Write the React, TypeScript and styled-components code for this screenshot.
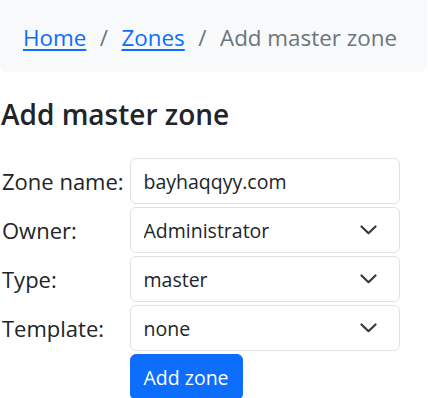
import React from "react";
import styled, { createGlobalStyle } from "styled-components";

const Global = createGlobalStyle`
  html, body { margin: 0; padding: 0; background: #fff; }
  body {
    font-family: "Open Sans", "Noto Sans", sans-serif;
    color: #212529;
    font-size: 22px;
    line-height: 1.5;
  }
  * { box-sizing: border-box; }
`;

const Page = styled.div`
  padding: 0 1px 0 1px;
`;

const Breadcrumb = styled.nav`
  background: #f8f9fa;
  border-radius: 0 0 8px 8px;
  padding: 21px 23px 17px;
  display: flex;
  align-items: center;
  margin-left: -1px;
  font-size: 22.4px;
`;

const Crumb = styled.a`
  color: #0d6efd;
  text-decoration: underline;
  text-underline-offset: 3px;
`;

const Sep = styled.span`
  color: #6c757d;
  padding: 0 13.5px;
`;

const Active = styled.span`
  color: #6c757d;
`;

const Heading = styled.h1`
  margin: 26px 0 27px;
  font-size: 28px;
  font-weight: 600;
  line-height: 1.2;
  color: #212529;
`;

const Form = styled.form`
  display: grid;
  grid-template-columns: 128.5px 270px;
  row-gap: 3px;
  align-items: center;
`;

const Label = styled.label`
  font-size: 22px;
  padding-left: 1px;
  white-space: nowrap;
`;

const controlBase = `
  width: 100%;
  height: 46px;
  font-family: "Open Sans", "Noto Sans", sans-serif;
  font-size: 19.5px;
  color: #212529;
  background: #fff;
  border: 1px solid #dee2e6;
  border-radius: 6px;
  padding: 0 13px;
  outline: none;
  margin: 0;
`;

const TextInput = styled.input`
  ${controlBase}
`;

const SelectWrap = styled.div`
  position: relative;
`;

const Select = styled.select`
  ${controlBase}
  appearance: none;
  -webkit-appearance: none;
`;

const Chevron = styled.svg`
  position: absolute;
  right: 23px;
  top: 50%;
  transform: translateY(-50%);
  pointer-events: none;
`;

const Button = styled.button`
  grid-column: 2;
  justify-self: start;
  height: 46px;
  padding: 0 13px;
  font-family: "Open Sans", "Noto Sans", sans-serif;
  font-size: 19.5px;
  color: #fff;
  background: #0d6efd;
  border: 1px solid #0d6efd;
  border-radius: 6px;
`;

const ChevronIcon = () => (
  <Chevron width="17" height="10" viewBox="0 0 17 10">
    <path d="M1.5 1.5 8.5 8.2 15.5 1.5" fill="none" stroke="#343a40" strokeWidth="2.2" strokeLinecap="round" strokeLinejoin="round" />
  </Chevron>
);

const SelectField = ({ id, value }: { id: string; value: string }) => (
  <SelectWrap>
    <Select id={id} defaultValue={value}>
      <option value={value}>{value}</option>
    </Select>
    <ChevronIcon />
  </SelectWrap>
);

export default function App() {
  return (
    <Page>
      <Global />
      <Breadcrumb>
        <Crumb href="#">Home</Crumb>
        <Sep>/</Sep>
        <Crumb href="#">Zones</Crumb>
        <Sep>/</Sep>
        <Active>Add master zone</Active>
      </Breadcrumb>
      <Heading>Add master zone</Heading>
      <Form onSubmit={(e) => e.preventDefault()}>
        <Label htmlFor="zname">Zone name:</Label>
        <TextInput id="zname" defaultValue="bayhaqqyy.com" />
        <Label htmlFor="owner">Owner:</Label>
        <SelectField id="owner" value="Administrator" />
        <Label htmlFor="type">Type:</Label>
        <SelectField id="type" value="master" />
        <Label htmlFor="tpl">Template:</Label>
        <SelectField id="tpl" value="none" />
        <Button type="submit">Add zone</Button>
      </Form>
    </Page>
  );
}
